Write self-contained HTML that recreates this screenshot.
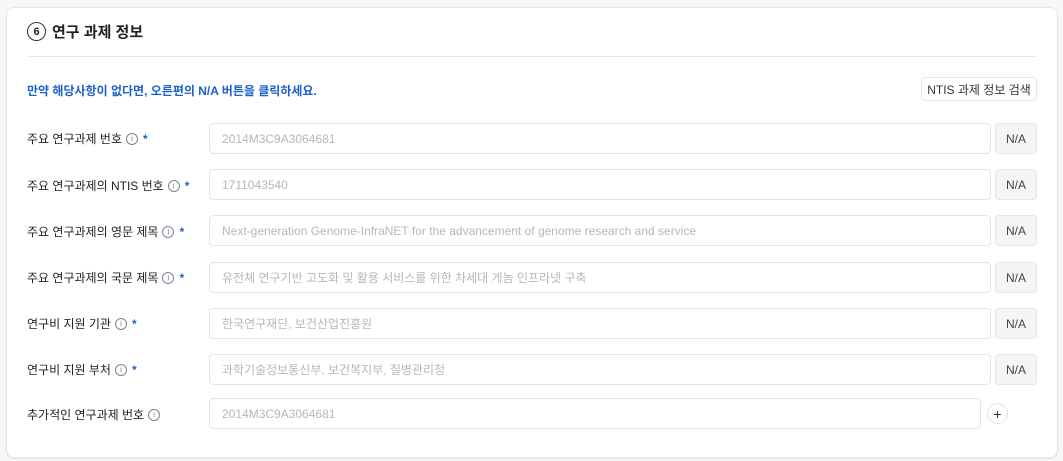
<!DOCTYPE html>
<html><head><meta charset="utf-8"><style>
body{margin:0;background:#f7f7f8;width:1063px;height:461px;overflow:hidden;font-family:"Liberation Sans","Noto Sans CJK KR",sans-serif;}
.card{position:absolute;left:6px;top:7px;width:1050px;height:449px;background:#fff;border:1px solid #e3e4e7;border-radius:8px;box-shadow:0 1px 2px rgba(0,0,0,.06);}
.t{position:absolute;left:27px;top:21px;font-size:15px;font-weight:bold;color:#222;display:flex;align-items:center;}
.num{width:19px;height:19px;border:1.2px solid #333;border-radius:50%;font-size:11px;display:inline-flex;align-items:center;justify-content:center;margin-right:6px;box-sizing:border-box;}
.hr{position:absolute;left:27px;top:56px;width:1010px;height:1px;background:#e8e9ec;}
.note{position:absolute;left:27px;top:82px;font-size:12px;font-weight:bold;color:#1d5fc9;}
.btn{position:absolute;left:921px;top:77px;width:116px;height:24px;border:1px solid #e6e7ea;border-radius:4px;font-size:12px;color:#333;box-sizing:border-box;display:flex;align-items:center;justify-content:center;}
.lab{position:absolute;left:27px;font-size:12px;color:#222;display:flex;align-items:center;}
.i{display:inline-flex;width:12px;height:12px;border:1px solid #7a8594;border-radius:50%;font-size:8px;color:#7a8594;align-items:center;justify-content:center;margin-left:4px;font-family:"Liberation Serif",serif;box-sizing:border-box;}
.s{color:#1d5fc9;margin-left:5px;font-weight:bold;}
.in{position:absolute;left:209px;width:782px;height:31px;border:1px solid #e3e4e7;border-radius:4px;box-sizing:border-box;font-size:12px;color:#b4b7bd;padding-left:12px;display:flex;align-items:center;}
.na{position:absolute;left:995px;width:42px;height:31px;background:#f4f5f7;border:1px solid #e6e7ea;border-radius:4px;box-sizing:border-box;font-size:12px;color:#444;display:flex;align-items:center;justify-content:center;}
.plus{position:absolute;left:987px;top:403px;width:21px;height:21px;border:1px solid #dfe0e3;border-radius:50%;box-sizing:border-box;display:flex;align-items:center;justify-content:center;font-size:14px;color:#333;}
</style></head><body>
<div class="card"></div>
<div class="t"><span class="num">6</span>연구 과제 정보</div>
<div class="hr"></div>
<div class="note">만약 해당사항이 없다면, 오른편의 N/A 버튼을 클릭하세요.</div>
<div class="btn">NTIS 과제 정보 검색</div>

<div class="lab" style="top:130px">주요 연구과제 번호<span class="i">i</span><span class="s">*</span></div>
<div class="in" style="top:123px">2014M3C9A3064681</div><div class="na" style="top:123px">N/A</div>

<div class="lab" style="top:177px">주요 연구과제의 NTIS 번호<span class="i">i</span><span class="s">*</span></div>
<div class="in" style="top:169px">1711043540</div><div class="na" style="top:169px">N/A</div>

<div class="lab" style="top:223px">주요 연구과제의 영문 제목<span class="i">i</span><span class="s">*</span></div>
<div class="in" style="top:215px">Next-generation Genome-InfraNET for the advancement of genome research and service</div><div class="na" style="top:215px">N/A</div>

<div class="lab" style="top:269px">주요 연구과제의 국문 제목<span class="i">i</span><span class="s">*</span></div>
<div class="in" style="top:262px">유전체 연구기반 고도화 및 활용 서비스를 위한 차세대 게놈 인프라넷 구축</div><div class="na" style="top:262px">N/A</div>

<div class="lab" style="top:315px">연구비 지원 기관<span class="i">i</span><span class="s">*</span></div>
<div class="in" style="top:308px">한국연구재단, 보건산업진흥원</div><div class="na" style="top:308px">N/A</div>

<div class="lab" style="top:361px">연구비 지원 부처<span class="i">i</span><span class="s">*</span></div>
<div class="in" style="top:354px">과학기술정보통신부, 보건복지부, 질병관리청</div><div class="na" style="top:354px">N/A</div>

<div class="lab" style="top:406px">추가적인 연구과제 번호<span class="i">i</span></div>
<div class="in" style="top:398px;width:772px">2014M3C9A3064681</div>
<div class="plus">+</div>
</body></html>
